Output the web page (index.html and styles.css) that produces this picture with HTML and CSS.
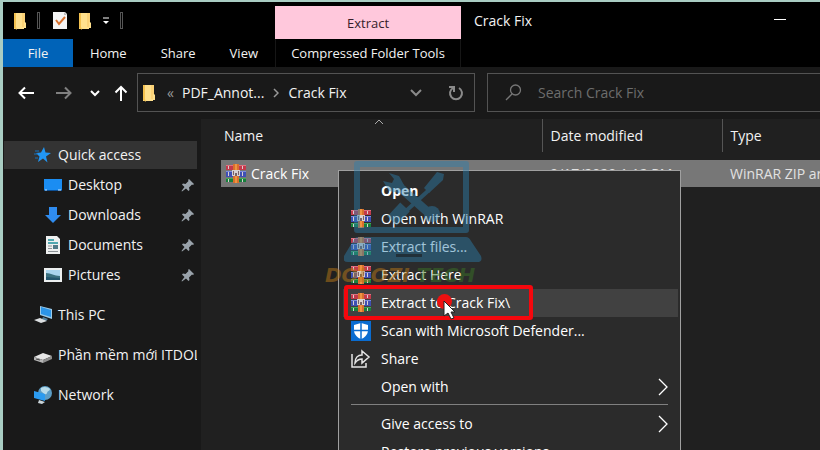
FILE: index.html
```
<!DOCTYPE html>
<html lang="en">
  <head>
    <meta charset="utf-8">
    <title>Crack Fix</title>
    <link rel="stylesheet" href="styles.css">
  </head>
  <body>
    <svg class="defs" width="0" height="0" aria-hidden="true">
      <symbol id="folder" viewBox="0 0 14 18">
        <path d="M1 1h8l1 1h2v8l1 1v5h-2v1H1z" fill="#ffe08d"/>
        <path d="M1 1h2v14l1 3-3-2z" fill="#f3c14f"/>
        <path d="M9 1h3v9h-1v5H9z" fill="#fbd277"/>
      </symbol>
      <symbol id="winrar" viewBox="0 0 20 20">
        <path d="M0 1h20v5H0z" fill="#c23a4c"/>
        <path d="M0 7h20v6H0z" fill="#3f50b4"/>
        <path d="M0 14h20v4H0z" fill="#16803c"/>
        <path d="M0 1h20v1H0z" fill="#e0707f"/>
        <path d="M0 7h20v1H0z" fill="#7c8ce0"/>
        <path d="M0 14h20v1H0z" fill="#44a45a"/>
        <path d="M2 2h1v3H2zM2 8h1v4H2zM2 15h1v3H2zM16 2h1v3h-1zM16 8h1v4h-1zM16 15h1v3h-1z" fill="#d9cfd0"/>
        <path d="M7 0h6v19H7z" fill="#d9702d"/>
        <path d="M9 0h2v19H9z" fill="#ee9442"/>
        <path d="M6 6h8v6H6z" fill="#d8d2d2"/>
        <path d="M7 7h1v4H7zM12 7h1v4h-1zM9 9h2v3H9z" fill="#7a6268"/>
      </symbol>
      <symbol id="pin" viewBox="0 0 14 14">
        <path d="M8 1l5 5-1 1-1-.5-3 3 .5 2.500-1 1L5 10.500 1 13.500.5 13l3-4L1 6.500l1-1 2.500.5 3-3L7 2z" fill="#9aa3ab"/>
      </symbol>
    </svg>

    <div class="window">
      <header class="titlebar">
        <div class="ribbon">
          <div class="toolbar">
            <svg width="14" height="18"><use href="#folder"/></svg>
            <i class="sep"></i>
            <button class="check" aria-label="Properties">
              <svg width="16" height="19" viewBox="0 0 16 19"><path d="M1 1h12l2 2v15H1z" fill="#f4f4f4"/><path d="M12 1v3h3z" fill="#bbb"/><path d="M4 9l3 4 6-7" fill="none" stroke="#d9722e" stroke-width="2"/></svg>
            </button>
            <button aria-label="New folder"><svg width="14" height="18"><use href="#folder"/></svg></button>
            <button aria-label="Customize toolbar">
              <svg width="8" height="8" viewBox="0 0 8 8"><path d="M1 1h6" stroke="#fff"/><path d="M1 4h6L4 7z" fill="#fff"/></svg>
            </button>
            <i class="sep"></i>
          </div>
          <nav class="tabs">
            <a class="file" href="#">File</a>
            <a href="#">Home</a>
            <a href="#">Share</a>
            <a href="#">View</a>
          </nav>
        </div>
        <div class="context-tab">
          <span>Extract</span>
          <a href="#">Compressed Folder Tools</a>
        </div>
        <h1>Crack Fix</h1>
        <button class="minimize" aria-label="Minimize"></button>
      </header>

      <div class="navbar">
        <div class="history">
          <button aria-label="Back"><svg width="16" height="14" viewBox="0 0 16 14"><path d="M16 7H2M7 1.500L1.500 7 7 12.500" fill="none" stroke="#fff" stroke-width="2"/></svg></button>
          <button aria-label="Forward"><svg width="16" height="14" viewBox="0 0 16 14"><path d="M0 7h14M9 1.500L14.500 7 9 12.500" fill="none" stroke="#808080" stroke-width="2"/></svg></button>
          <button aria-label="Recent locations"><svg width="10" height="8" viewBox="0 0 10 8"><path d="M1 2l4 4 4-4" fill="none" stroke="#fff" stroke-width="2"/></svg></button>
          <button aria-label="Up"><svg width="14" height="16" viewBox="0 0 14 16"><path d="M7 16V2M1.500 7.500L7 2l5.500 5.500" fill="none" stroke="#fff" stroke-width="2"/></svg></button>
        </div>
        <div class="address">
          <svg width="14" height="18"><use href="#folder"/></svg>
          <span class="more">«</span>
          <a href="#">PDF_Annot...</a>
          <svg class="crumb" width="6" height="10" viewBox="0 0 6 10"><path d="M1 1l4 4-4 4" fill="none" stroke="#999" stroke-width="1.500"/></svg>
          <a href="#">Crack Fix</a>
          <button class="drop" aria-label="Previous locations"><svg width="12" height="8" viewBox="0 0 12 8"><path d="M1 1l5 5 5-5" fill="none" stroke="#8a8a8a" stroke-width="2"/></svg></button>
          <button aria-label="Refresh"><svg width="16" height="16" viewBox="0 0 16 16"><path d="M11 3a6 6 0 1 1-6 0" fill="none" stroke="#8a8a8a" stroke-width="2"/><path d="M1 2h5v5" fill="none" stroke="#8a8a8a" stroke-width="2"/></svg></button>
        </div>
        <label class="search">
          <svg width="17" height="17" viewBox="0 0 17 17"><circle cx="10.500" cy="6" r="5" fill="none" stroke="#777" stroke-width="1.300"/><path d="M7 10l-6 6" stroke="#777" stroke-width="1.300"/></svg>
          <input type="text" placeholder="Search Crack Fix" aria-label="Search Crack Fix">
        </label>
      </div>

      <div class="main">
        <nav class="sidebar">
          <a class="active" href="#"><svg width="18" height="18" viewBox="0 0 18 18"><path d="M10 1l1.500 5.500L17 7l-5 3.500 1.500 6L9 12.500 4 16l1.500-5.500L2 7l5-.5z" fill="#2196f3"/><path d="M1 5h4M0 8h4M1 12h3" stroke="#1672bd"/></svg><span>Quick access</span></a>
          <a class="sub" href="#"><svg width="18" height="18" viewBox="0 0 18 18"><path d="M0 3h18v12H0z" fill="#1b8df2"/><path d="M0 14h18v1H0z" fill="#0b4f95"/><path d="M1 14h2M14 14h3" stroke="#cde7ff"/></svg><span>Desktop</span><svg class="pin" width="14" height="14"><use href="#pin"/></svg></a>
          <a class="sub" href="#"><svg width="18" height="18" viewBox="0 0 18 18"><path d="M5 1h8v8h4l-8 8-8-8h4z" fill="#2f8cf0"/></svg><span>Downloads</span><svg class="pin" width="14" height="14"><use href="#pin"/></svg></a>
          <a class="sub" href="#"><svg width="18" height="18" viewBox="0 0 18 18"><path d="M2 0h11l3 3v15H2z" fill="#eef0f0"/><path d="M4 4h6M4 7h10" stroke="#1d8f9b" stroke-width="1.500"/><path d="M4 10h4M4 12.500h4M4 15.500h10" stroke="#8c9296"/><path d="M9 9h5v4H9z" fill="#507a88"/></svg><span>Documents</span><svg class="pin" width="14" height="14"><use href="#pin"/></svg></a>
          <a class="sub" href="#"><svg width="18" height="18" viewBox="0 0 18 18"><path d="M0 2h18v14H0z" fill="#eceff0"/><path d="M2 4h14v10H2z" fill="#a9d5ee"/><path d="M2 7c5 0 8 3 14 3v4H2z" fill="#3b7180"/><path d="M2 11l14 1v2H2z" fill="#24576f"/></svg><span>Pictures</span><svg class="pin" width="14" height="14"><use href="#pin"/></svg></a>
          <a class="root" href="#"><svg width="18" height="18" viewBox="0 0 18 18"><path d="M6 0l12 3v10L6 9z" fill="#9bcbe9"/><path d="M7 1l10 3v7L7 8z" fill="#2c95e8"/><path d="M9 11l5 2-2 2-4-2z" fill="#52809c"/><path d="M0 14l6-2 7 3-6 2z" fill="#dcdfe1"/></svg><span>This PC</span></a>
          <a class="root" href="#"><svg width="18" height="18" viewBox="0 0 18 18"><path d="M0 11l9-4 9 3-9 4z" fill="#e6e6e6"/><path d="M0 11l9 3v3l-9-3z" fill="#b5b5b5"/><path d="M9 14l9-4v3l-9 4z" fill="#8d8d8d"/><path d="M2 13l4 1" stroke="#444"/></svg><span>Phần mềm mới ITDOLOZI</span></a>
          <a class="root" href="#"><svg width="18" height="18" viewBox="0 0 18 18"><circle cx="11" cy="7" r="7" fill="#5c9dc6"/><path d="M7 2c3-2 7-1 9 1-1 3-2 1-3 4s-4 0-6-2z" fill="#b7dbea"/><path d="M0 5l11 3v7L0 12z" fill="#2b9bf0"/><path d="M5 14l6 2-3 2-4-1z" fill="#cbd5da"/></svg><span>Network</span></a>
        </nav>

        <div class="files">
          <svg class="sort" width="10" height="6" viewBox="0 0 10 6"><path d="M1 5l4-4 4 4" fill="none" stroke="#aaa"/></svg>
          <table>
            <thead>
              <tr><th class="name">Name</th><th class="date">Date modified</th><th>Type</th></tr>
            </thead>
            <tbody>
              <tr>
                <td><span class="filename"><svg width="20" height="20"><use href="#winrar"/></svg>Crack Fix</span></td>
                <td>9/17/2020 1:12 PM</td>
                <td>WinRAR ZIP archive</td>
              </tr>
            </tbody>
          </table>

          <div class="menu" role="menu">
            <button role="menuitem" class="default"><i></i>Open</button>
            <button role="menuitem"><svg width="20" height="20"><use href="#winrar"/></svg>Open with WinRAR</button>
            <button role="menuitem"><svg width="20" height="20"><use href="#winrar"/></svg>Extract files...</button>
            <button role="menuitem"><svg width="20" height="20"><use href="#winrar"/></svg>Extract Here</button>
            <button role="menuitem" class="hover"><svg width="20" height="20"><use href="#winrar"/></svg>Extract to Crack Fix\</button>
            <button role="menuitem"><svg width="20" height="20" viewBox="0 0 20 20"><path d="M0 0h20v20H0z" fill="#0a6cd0"/><path d="M10 2l7 2v5c0 5-4 8-7 9-3-1-7-4-7-9V4z" fill="#fff"/><path d="M10 2v16M3 9.500h14" stroke="#0a6cd0" stroke-width="1.500"/></svg>Scan with Microsoft Defender...</button>
            <button role="menuitem"><svg width="20" height="20" viewBox="0 0 20 20"><path d="M1 5v13h14v-4M11 2l7 6-7 6v-4c-3 0-5 1-7 4 0-5 3-8 7-8z" fill="none" stroke="#e6e6e6" stroke-width="1.500"/></svg>Share</button>
            <button role="menuitem"><i></i>Open with<svg class="arrow" width="10" height="18" viewBox="0 0 10 18"><path d="M1 1l8 8-8 8" fill="none" stroke="#fff" stroke-width="1.300"/></svg></button>
            <hr>
            <button role="menuitem"><i></i>Give access to<svg class="arrow" width="10" height="18" viewBox="0 0 10 18"><path d="M1 1l8 8-8 8" fill="none" stroke="#fff" stroke-width="1.300"/></svg></button>
            <button role="menuitem"><i></i>Restore previous versions</button>
          </div>

          <div class="watermark">
            <svg width="138" height="104" viewBox="0 0 138 104">
              <path d="M13 3h109v66H13z" fill="none" stroke="#2d7fae" stroke-width="6" stroke-linejoin="round"/>
              <path d="M14 76h108q3 0 5 4l10 15q2 6-4 6H4q-6 0-4-6l9-15q2-4 5-4z" fill="#2d7fae"/>
              <path d="M52 93h26v3H52z" fill="#16384b"/>
              <path d="M51 22l36 32" stroke="#2d7fae" stroke-width="9"/>
              <path d="M45 12l10 3 5 9-5 8-10-2-6-10 9 2 2-4z" fill="#2d7fae"/>
              <circle cx="88" cy="53" r="8" fill="#2d7fae"/>
              <path d="M85 29L51 60" stroke="#2d7fae" stroke-width="4"/>
              <path d="M61 46L48 60" stroke="#2d7fae" stroke-width="13"/>
              <path d="M80 27l13-16 7 2-1 6-14 13z" fill="#2d7fae"/>
            </svg>
            <p><span>DOLOZI</span> TECH</p>
          </div>

          <div class="highlight">
            <i class="click"></i>
            <svg class="cursor" width="14" height="20" viewBox="0 0 14 20"><path d="M2 1v15l4-3 3 6 3-1-3-6h4z" fill="#fff" stroke="#222"/></svg>
          </div>
        </div>
      </div>
    </div>
  </body>
</html>
```
FILE: styles.css
```
* { box-sizing:border-box; }
body { margin:0; background:#a9cdc3; color:#f2f2f2; font:14px/20px "Open Sans","Noto Sans",sans-serif; }
a { color:inherit; text-decoration:none; }
button { margin:0; padding:0; border:0; background:none; color:inherit; font:inherit; }
svg { display:block; flex:none; }
.defs { position:absolute; }
.window { display:flex; flex-direction:column; height:100vh; padding:2px 0 0 3px; overflow:hidden; }

.titlebar { display:flex; flex:none; height:65px; background:#000; }
.ribbon { display:flex; flex-direction:column; width:272px; }
.toolbar { display:flex; align-items:center; height:37px; padding-left:10px; gap:10px; }
.toolbar .sep { width:3px; height:17px; border:1px solid #555; }
.toolbar .check { margin-left:2px; }
.tabs { display:flex; height:28px; font-size:13px; line-height:28px; }
.tabs a { padding:0 17px; }
.tabs .file { width:70px; padding:0; background:#0063b8; text-align:center; }
.context-tab { width:186px; padding-top:4px; font-size:13px; text-align:center; }
.context-tab span { display:block; height:33px; background:#ffc8dc; color:#35202a; line-height:34px; }
.context-tab a { display:block; line-height:28px; border:solid #161616; border-width:0 1px; }
h1 { flex:1; margin:0; padding:9px 13px; font-size:14px; font-weight:400; line-height:20px; }
.minimize { width:12px; height:1px; margin:17px 34px 0 0; background:#fff; }

.navbar { display:flex; flex:none; height:52px; padding-top:6px; background:#191919; }
.history { display:flex; align-items:center; width:134px; height:39px; padding-left:15px; gap:22px; }
.history button + button + button { margin-left:-4px; }
.history button:last-child { margin-left:-8px; }
.address { display:flex; align-items:center; width:338px; height:39px; padding:0 10px 0 4px; border:1px solid #535353; }
.address .more { margin:0 8px 0 11px; color:#999; }
.address .crumb { margin:0 9px; }
.address .drop { margin:0 26px 0 auto; }
.search { display:flex; flex:1; align-items:center; height:39px; margin-left:12px; padding-left:17px; gap:16px; border:1px solid #535353; border-right:0; }
.search input { flex:1; min-width:0; padding:0; border:0; outline:0; background:none; color:#fff; font:inherit; }
.search input::placeholder { color:#6d6d6d; opacity:1; }

.main { display:flex; flex:1; min-height:0; background:#191919; }
.sidebar { display:flex; flex:none; flex-direction:column; width:196px; padding:22px 2px 0 1px; gap:2px; }
.sidebar a { display:flex; flex:none; align-items:center; height:28px; padding-left:30px; gap:6px; white-space:nowrap; }
.sidebar .active { background:#333; }
.sidebar .sub { padding:0 2px 0 40px; }
.sidebar .root { margin-top:10px; overflow:hidden; }
.sidebar .pin { margin-left:auto; }

.files { position:relative; flex:1; min-width:0; margin-left:2px; padding-left:20px; background:#202020; overflow:hidden; }
.sort { position:absolute; left:173px; top:0; }
table { width:100%; min-width:600px; border-collapse:collapse; table-layout:fixed; }
th { height:33px; padding:0 8px; border-left:1px solid #555; font-weight:400; text-align:left; }
th.name { width:321px; padding-left:3px; border-left:0; }
th.date { width:180px; }
tbody::before { content:""; display:block; height:8px; }
tbody tr { height:27px; background:#777; }
td { padding:0 8px; color:#e2e2e2; white-space:nowrap; }
td:first-child { padding-left:5px; }
.filename { display:flex; align-items:center; gap:5px; color:#fff; }

.menu { position:absolute; left:137px; top:51px; width:343px; padding:6px 2px 4px 4px; border:1px solid #a0a0a0; background:#2b2b2b; }
.menu button { display:flex; align-items:center; width:100%; height:28px; padding-left:8px; gap:10px; color:#fff; }
.menu button i { width:20px; }
.menu .default { font-weight:700; }
.menu .hover { background:#414141; }
.menu .arrow { margin:0 10px 0 auto; }
.menu hr { height:1px; margin:3px 10px 5px 8px; border:0; background:#808080; }

.watermark { position:absolute; left:124px; top:42px; width:172px; }
.watermark svg { margin-left:19px; opacity:.45; }
.watermark p { margin:0; color:#397326; font:italic 700 20px/20px "DejaVu Sans",sans-serif; white-space:nowrap; opacity:.5; }
.watermark span { color:#b97818; }
.highlight { position:absolute; left:143px; top:166px; width:189px; height:35px; border:4px solid #f5070d; border-radius:3px; }
.click { position:absolute; left:89px; top:5px; width:15px; height:15px; border-radius:50%; background:#ee1010; }
.cursor { position:absolute; left:94px; top:11px; }
```
